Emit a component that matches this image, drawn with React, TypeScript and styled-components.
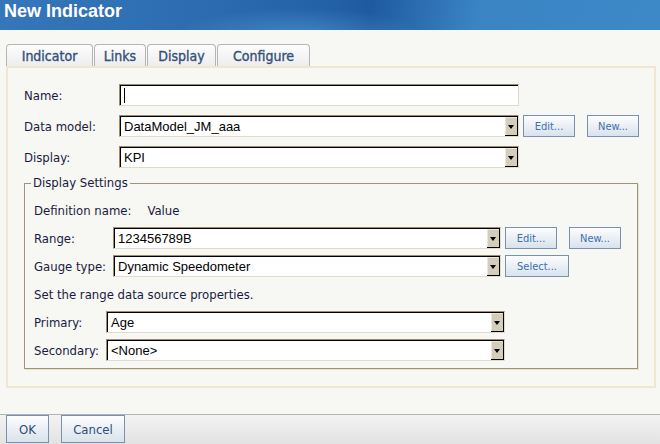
import React from "react";
import styled, { createGlobalStyle } from "styled-components";

const Global = createGlobalStyle`
  html, body { margin: 0; padding: 0; background: #f7f7f4; }
  body { font-family: "DejaVu Sans Condensed", "DejaVu Sans", sans-serif; font-stretch: condensed; }
`;

const UI = `"DejaVu Sans Condensed", "DejaVu Sans", sans-serif`;

const Page = styled.div`
  width: 660px;
  height: 444px;
  display: flex;
  flex-direction: column;
  background: #f7f7f4;
  overflow: hidden;
`;

const Header = styled.div`
  height: 30px;
  flex: none;
  box-sizing: border-box;
  padding-left: 4px;
  line-height: 22px;
  font-family: "Liberation Sans", Arial, sans-serif;
  font-weight: bold;
  font-size: 18px;
  color: #ffffff;
  background:
    radial-gradient(ellipse 180px 40px at 300px 36px, rgba(90, 160, 220, 0.55), rgba(90, 160, 220, 0) 70%),
    linear-gradient(100deg, #3577ba 0%, #2d6cb0 30%, #2462a8 48%, #1f5a9f 56%, #3a84c4 72%, #3d89c8 100%);
`;

const TabBar = styled.div`
  display: flex;
  gap: 1px;
  margin-top: 14px;
  padding-left: 6px;
  height: 22px;
  flex: none;
`;

const Tab = styled.div<{ $w: number }>`
  width: ${(p) => p.$w}px;
  box-sizing: border-box;
  height: 22px;
  border: 1px solid #b5b5b5;
  border-bottom: none;
  border-radius: 4px 4px 0 0;
  background: linear-gradient(#fdfdfd, #ededed);
  display: flex;
  align-items: center;
  justify-content: center;
  font-family: ${UI};
  font-stretch: condensed;
  font-size: 14px;
  color: #34507a;
  -webkit-text-stroke: 0.35px #34507a;
`;

const Panel = styled.div`
  margin: 0 4px 0 6px;
  height: 322px;
  flex: none;
  box-sizing: border-box;
  border: 2px solid #efe7cf;
  padding: 16px 16px 0 16px;
  display: flex;
  flex-direction: column;
`;

const Rows = styled.div`
  display: flex;
  flex-direction: column;
  gap: 9px;
`;

const Row = styled.div<{ $top?: number }>`
  display: flex;
  align-items: center;
  height: 22px;
  margin-top: ${(p) => p.$top ?? 0}px;
`;

const TextRow = styled.div<{ $top?: number }>`
  display: flex;
  align-items: center;
  height: 16px;
  line-height: 16px;
  margin-top: ${(p) => p.$top ?? 0}px;
  font-family: ${UI};
  font-stretch: condensed;
  font-size: 13px;
  color: #1a1a40;
`;

const Label = styled.div<{ $w: number }>`
  width: ${(p) => p.$w}px;
  flex: none;
  font-family: ${UI};
  font-stretch: condensed;
  font-size: 13px;
  color: #1a1a40;
  white-space: nowrap;
`;

const Field = styled.div<{ $w: number }>`
  width: ${(p) => p.$w}px;
  height: 22px;
  flex: none;
  box-sizing: border-box;
  border-top: 1px solid #9b8c72;
  border-left: 1px solid #9b8c72;
  border-right: 1px solid #e2dacb;
  border-bottom: 1px solid #e2dacb;
  background: #ffffff;
  display: flex;
`;

const FieldText = styled.div`
  flex: 1;
  min-width: 0;
  border-top: 1px solid #000000;
  border-left: 1px solid #000000;
  padding-left: 3px;
  display: flex;
  align-items: center;
  font-family: "Liberation Sans", Arial, sans-serif;
  font-size: 13px;
  color: #000000;
  white-space: nowrap;
`;

const Caret = styled.span`
  display: inline-block;
  width: 1px;
  height: 15px;
  background: #000000;
`;

const Arrow = styled.div`
  width: 13px;
  flex: none;
  border-top: 1px solid #000000;
  background: #d5cdbb;
  box-shadow: inset -1px -1px 0 #000000, inset 1px 1px 0 #ece6d9;
  display: flex;
  align-items: center;
  justify-content: center;
  &::after {
    content: "";
    width: 0;
    height: 0;
    border-left: 3px solid transparent;
    border-right: 3px solid transparent;
    border-top: 4px solid #000000;
    margin-right: 1px;
  }
`;

const SmallButton = styled.div<{ $w: number; $gap: number }>`
  width: ${(p) => p.$w}px;
  height: 22px;
  margin-left: ${(p) => p.$gap}px;
  flex: none;
  box-sizing: border-box;
  border: 1px solid #7891b1;
  background: linear-gradient(#fcfdfe, #d9e2ec);
  display: flex;
  align-items: center;
  justify-content: center;
  font-family: ${UI};
  font-stretch: condensed;
  font-size: 11px;
  color: #4070aa;
`;

const Fieldset = styled.fieldset`
  margin: 7px 0 0 0;
  width: 614px;
  box-sizing: border-box;
  min-inline-size: 0;
  border: 1px solid #a0937c;
  box-shadow: 1px 1px 0 #e6e0d0;
  padding: 0 9px 7px 9px;
  display: flex;
  flex-direction: column;
`;

const Legend = styled.legend`
  margin-left: -3px;
  padding: 0 2px;
  line-height: 16px;
  font-family: ${UI};
  font-stretch: condensed;
  font-size: 13px;
  color: #1a1a40;
`;

const Value = styled.span`
  margin-left: 16px;
`;

const Footer = styled.div`
  margin-top: auto;
  height: 30px;
  flex: none;
  box-sizing: border-box;
  border-top: 1px solid #b2b2b2;
  background: linear-gradient(#f3f3f3, #e2e2e2);
  padding-left: 6px;
  display: flex;
  align-items: flex-start;
  gap: 12px;
`;

const FooterButton = styled.div<{ $w: number }>`
  width: ${(p) => p.$w}px;
  height: 28px;
  flex: none;
  box-sizing: border-box;
  border: 1px solid #7891b1;
  background: linear-gradient(#fcfdfe, #d9e2ec);
  display: flex;
  align-items: center;
  justify-content: center;
  font-family: ${UI};
  font-stretch: condensed;
  font-size: 13px;
  color: #2d4e78;
`;

function Select({ w, value }: { w: number; value: string }) {
  return (
    <Field $w={w}>
      <FieldText>{value}</FieldText>
      <Arrow />
    </Field>
  );
}

export default function App() {
  return (
    <Page>
      <Global />
      <Header>New Indicator</Header>
      <TabBar>
        <Tab $w={87}>Indicator</Tab>
        <Tab $w={52}>Links</Tab>
        <Tab $w={69}>Display</Tab>
        <Tab $w={93}>Configure</Tab>
      </TabBar>
      <Panel>
        <Rows>
          <Row>
            <Label $w={95}>Name:</Label>
            <Field $w={400}>
              <FieldText>
                <Caret />
              </FieldText>
            </Field>
          </Row>
          <Row>
            <Label $w={95}>Data model:</Label>
            <Select w={400} value="DataModel_JM_aaa" />
            <SmallButton $w={52} $gap={4}>Edit...</SmallButton>
            <SmallButton $w={52} $gap={12}>New...</SmallButton>
          </Row>
          <Row>
            <Label $w={95}>Display:</Label>
            <Select w={400} value="KPI" />
          </Row>
        </Rows>
        <Fieldset>
          <Legend>Display Settings</Legend>
          <TextRow $top={12}>
            Definition name:<Value>Value</Value>
          </TextRow>
          <Row $top={8}>
            <Label $w={79}>Range:</Label>
            <Select w={388} value="123456789B" />
            <SmallButton $w={52} $gap={4}>Edit...</SmallButton>
            <SmallButton $w={52} $gap={12}>New...</SmallButton>
          </Row>
          <Row $top={6}>
            <Label $w={79}>Gauge type:</Label>
            <Select w={388} value="Dynamic Speedometer" />
            <SmallButton $w={64} $gap={4}>Select...</SmallButton>
          </Row>
          <TextRow $top={10}>Set the range data source properties.</TextRow>
          <Row $top={8}>
            <Label $w={72}>Primary:</Label>
            <Select w={399} value="Age" />
          </Row>
          <Row $top={6}>
            <Label $w={72}>Secondary:</Label>
            <Select w={399} value="<None>" />
          </Row>
        </Fieldset>
      </Panel>
      <Footer>
        <FooterButton $w={43}>OK</FooterButton>
        <FooterButton $w={64}>Cancel</FooterButton>
      </Footer>
    </Page>
  );
}
